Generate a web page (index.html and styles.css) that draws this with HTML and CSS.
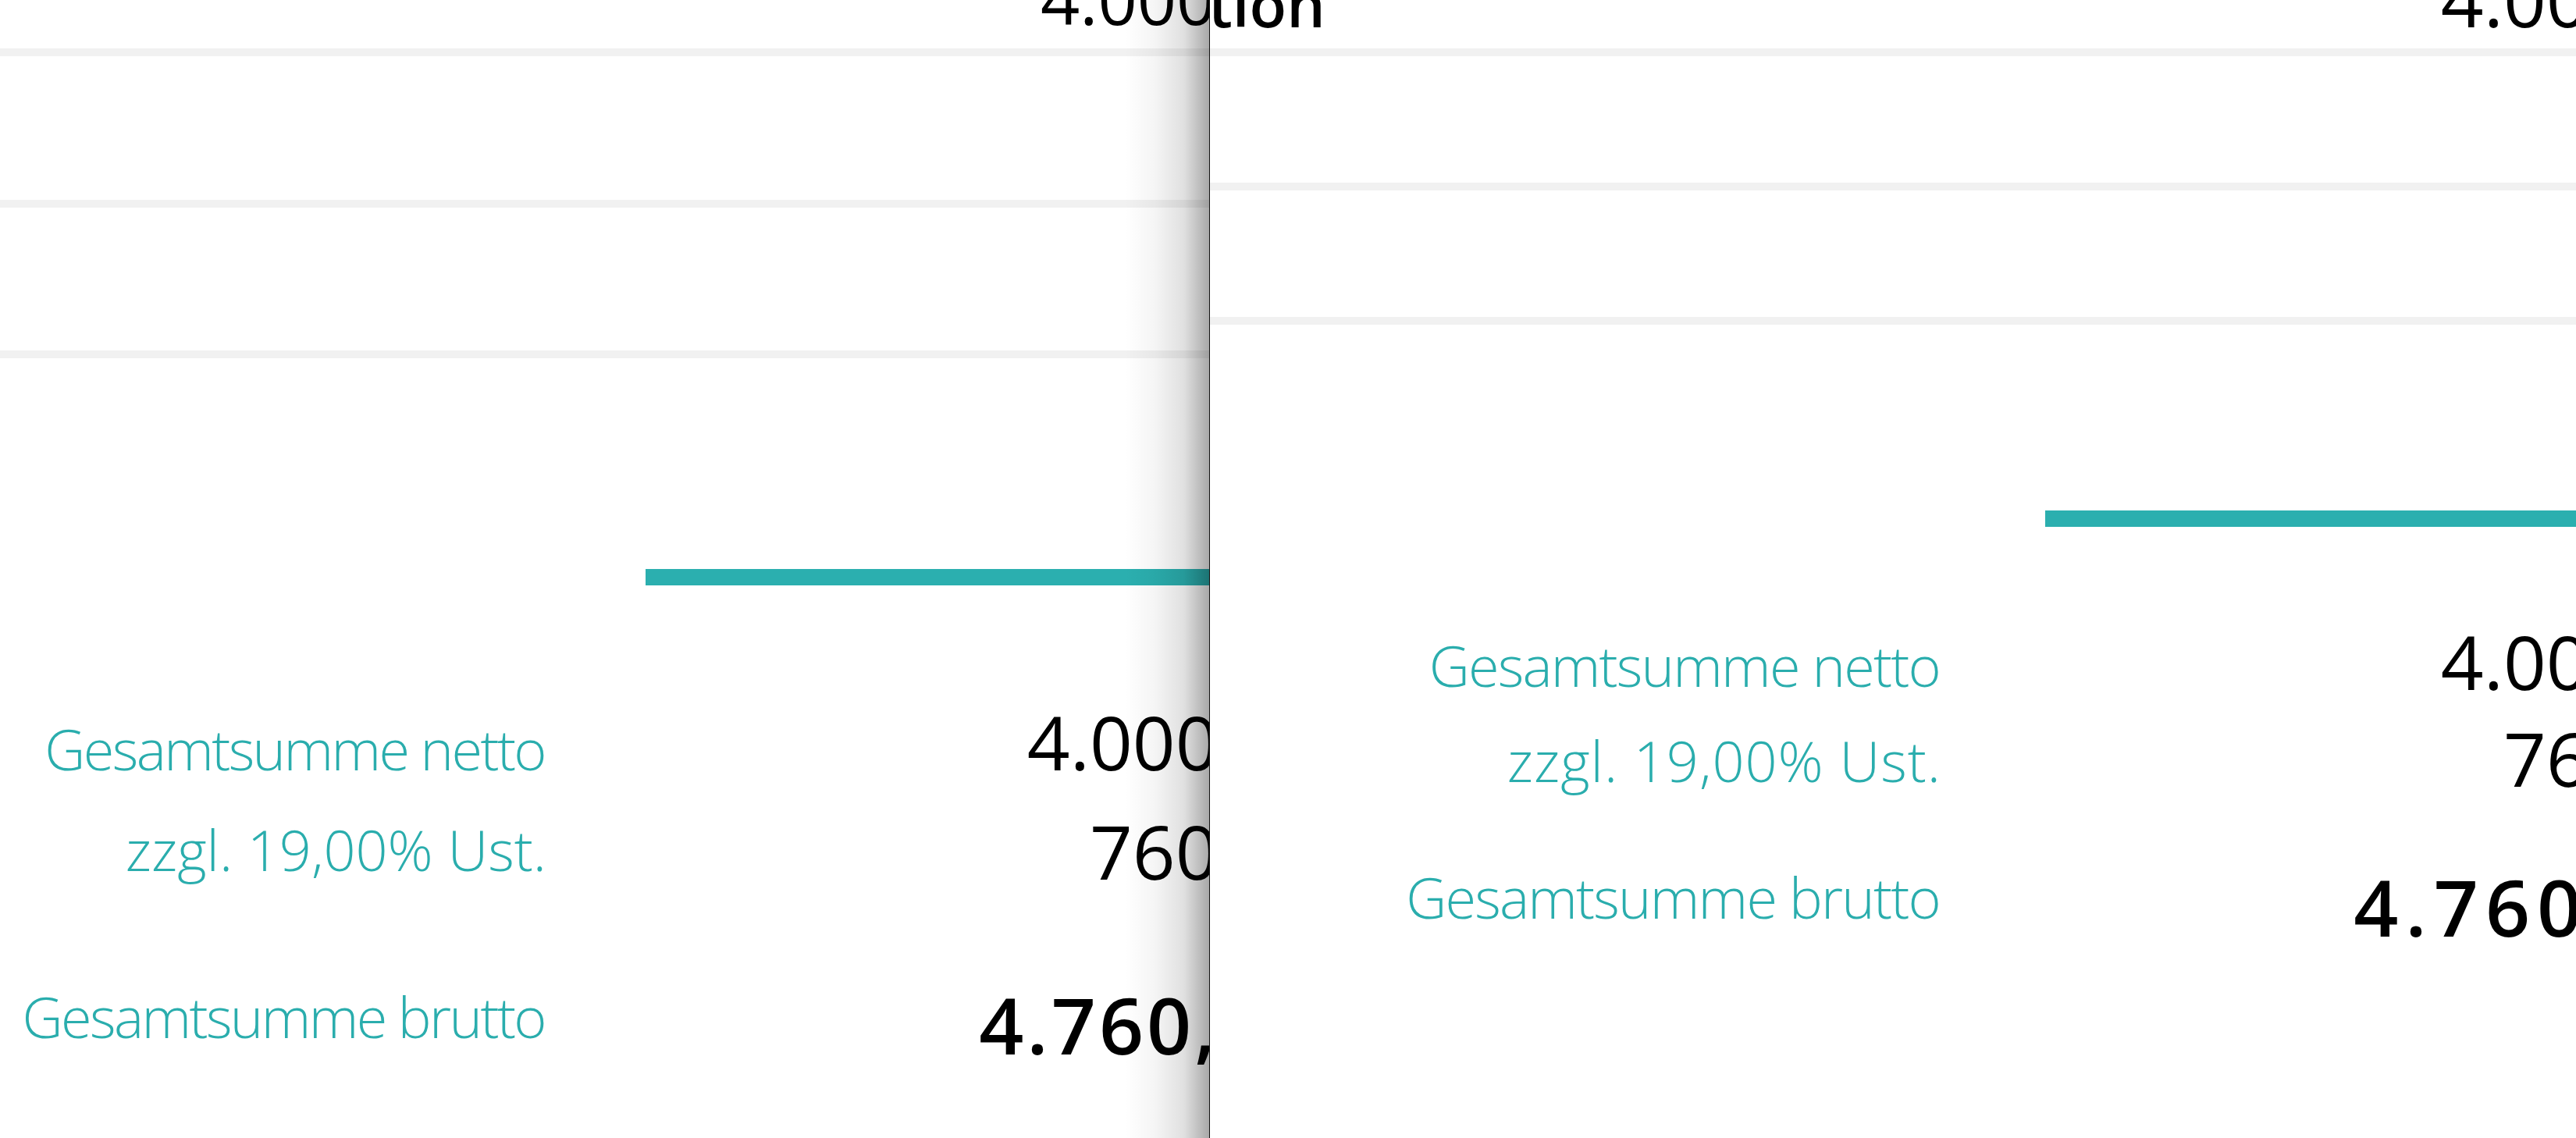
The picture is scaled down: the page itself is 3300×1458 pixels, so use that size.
FILE: index.html
```html
<!DOCTYPE html>
<html>
  <head>
    <meta name="viewport" content="width=device-width, initial-scale=1" />
    <link rel="stylesheet" href="styles.css">
  </head>
  <body>
    <div class="compare">
      <div class="pane pane-old">
        <div class="top">
          <span class="top-value">4.000,00 €</span>
        </div>
        <div class="rule"></div>
        <div class="row"></div>
        <div class="rule"></div>
        <div class="row row-b"></div>
        <div class="rule"></div>

        <div class="sum-bar"></div>

        <div class="totals">
          <div class="labels">
            <span class="lbl lbl-netto">Gesamtsumme netto</span>
            <span class="lbl lbl-tax">zzgl. 19,00% Ust.</span>
            <span class="lbl lbl-brutto">Gesamtsumme brutto</span>
          </div>
          <div class="values">
            <span class="val val-netto">4.000,00 €</span>
            <span class="val val-tax">760,00 €</span>
            <span class="val val-brutto">4.760,00 €</span>
          </div>
        </div>
      </div>

      <div class="pane pane-new">
        <div class="top">
          <span class="top-title">tion</span>
          <span class="top-value">4.000,00 €</span>
        </div>
        <div class="rule"></div>
        <div class="row"></div>
        <div class="rule"></div>
        <div class="row"></div>
        <div class="rule"></div>

        <div class="sum-bar"></div>

        <div class="totals">
          <div class="labels">
            <span class="lbl lbl-netto">Gesamtsumme netto</span>
            <span class="lbl lbl-tax">zzgl. 19,00% Ust.</span>
            <span class="lbl lbl-brutto">Gesamtsumme brutto</span>
          </div>
          <div class="values">
            <span class="val val-netto">4.000,00 €</span>
            <span class="val val-tax">760,00 €</span>
            <span class="val val-brutto">4.760,00 €</span>
          </div>
        </div>
      </div>
    </div>
  </body>
</html>
```

FILE: styles.css
```css
* {
  box-sizing: border-box;
}
html,
body {
  margin: 0;
  height: 100%;
  overflow: hidden;
  background: #fff;
}
body {
  font-family: "Open Sans", "Noto Sans", Arial, sans-serif;
  color: #000;
}

.compare {
  display: flex;
  height: 1458px;
}

.pane {
  position: relative;
  overflow: hidden;
  display: flex;
  flex-direction: column;
  background: #fff;
}
.pane-old {
  width: 1549px;
  flex: none;
}
.pane-new {
  flex: 1;
  border-left: 1px solid #111;
}

/* shadow thrown by the right page onto the left one */
.pane-old::after {
  content: "";
  position: absolute;
  top: 0;
  right: 0;
  bottom: 0;
  width: 108px;
  background: linear-gradient(
    to right,
    rgba(0, 0, 0, 0) 0%,
    rgba(0, 0, 0, 0.04) 35%,
    rgba(0, 0, 0, 0.12) 70%,
    rgba(0, 0, 0, 0.34) 100%
  );
  pointer-events: none;
}

/* first (cut off) row */
.top {
  display: flex;
  align-items: baseline;
  height: 62px;
  flex: none;
}
.pane-old .top {
  margin-top: -46px;
  height: 108px;
}
.pane-old .top-value {
  font-size: 88px;
  line-height: 1;
  margin-left: auto;
  margin-right: -205px;
}
.pane-new .top {
  margin-top: -50px;
  height: 112px;
}
.top-title {
  font-size: 78px;
  font-weight: 600;
  line-height: 1;
  margin-left: -2px;
}
.pane-new .top-value {
  font-size: 96px;
  line-height: 1;
  margin-left: auto;
  margin-right: -286px;
}

.rule {
  height: 10px;
  flex: none;
  background: #f1f1f1;
}
.row {
  flex: none;
}
.pane-old .row {
  height: 184px;
}
.pane-old .row-b {
  height: 183px;
}
.pane-new .row {
  height: 162px;
}

.sum-bar {
  flex: none;
  height: 21px;
  background: #2bafaf;
}
.pane-old .sum-bar {
  margin-top: 270px;
  margin-left: 827px;
}
.pane-new .sum-bar {
  margin-top: 238px;
  margin-left: 1070px;
}

/* totals block */
.totals {
  display: flex;
  flex: none;
}
.labels,
.values {
  display: flex;
  flex-direction: column;
  flex: none;
  text-align: right;
}
.lbl {
  font-size: 72px;
  font-weight: 300;
  line-height: 1;
  color: #2aadad;
  white-space: nowrap;
}
.lbl-netto,
.lbl-brutto {
  letter-spacing: -2.6px;
  margin-right: 2px;
}
.val {
  font-size: 96px;
  line-height: 1;
  white-space: nowrap;
}
.val-brutto {
  font-weight: 600;
  font-size: 100px;
}

.pane-old .labels {
  width: 700px;
}
.pane-old .lbl-netto {
  margin-top: 173px;
}
.pane-old .lbl-tax {
  margin-top: 57px;
}
.pane-old .lbl-brutto {
  margin-top: 142px;
}
.pane-old .values {
  width: 1075px;
}
.pane-old .val-netto {
  margin-top: 152px;
}
.pane-old .val-tax {
  margin-top: 44px;
}
.pane-old .val-brutto {
  margin-top: 124px;
  letter-spacing: 4px;
}

.pane-new .labels {
  width: 936px;
}
.pane-new .lbl-tax {
  letter-spacing: 1px;
  margin-right: -1px;
}
.pane-new .lbl-netto,
.pane-new .lbl-brutto {
  letter-spacing: -1.8px;
  margin-right: 1px;
}
.pane-new .lbl-netto {
  margin-top: 141px;
}
.pane-new .lbl-tax {
  margin-top: 50px;
}
.pane-new .lbl-brutto {
  margin-top: 103px;
}
.pane-new .values {
  width: 1100px;
}
.pane-new .val-netto {
  margin-top: 124px;
}
.pane-new .val-tax {
  margin-top: 28px;
}
.pane-new .val-brutto {
  margin-top: 92px;
  letter-spacing: 9px;
}
```
